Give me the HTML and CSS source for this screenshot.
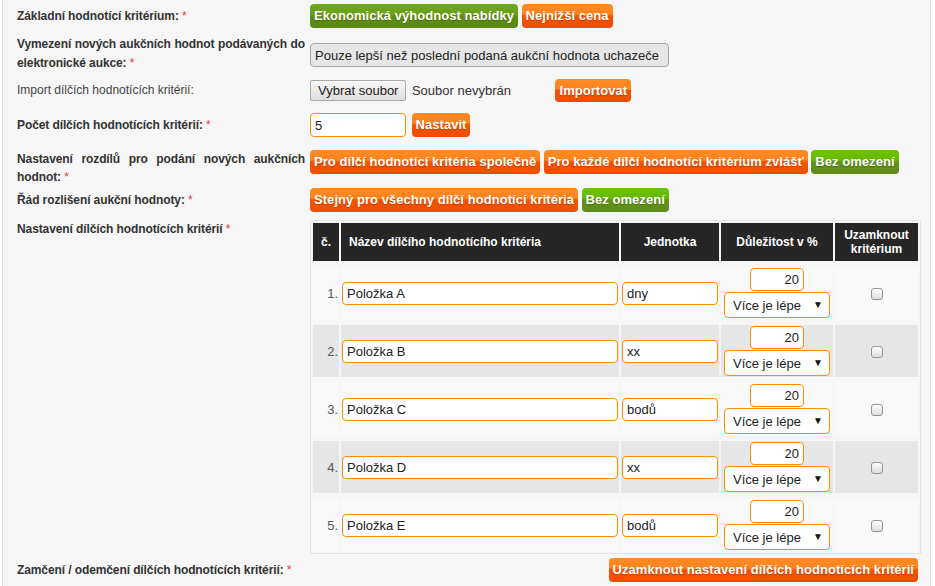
FILE: index.html
```html
<!DOCTYPE html>
<html>
  <head>
    <meta charset="UTF-8" />
    <title>Nastavení hodnotících kritérií</title>
    <link rel="stylesheet" href="styles.css">
  </head>
  <body>
    <div class="page">
      <div class="row row-1">
        <div class="label">Základní hodnotící kritérium: <span class="req">*</span></div>
        <div class="value">
          <button class="btn btn-green active">Ekonomická výhodnost nabídky</button>
          <button class="btn">Nejnižší cena</button>
        </div>
      </div>

      <div class="row row-2 top">
        <div class="label justify">Vymezení nových aukčních hodnot podávaných do elektronické aukce: <span class="req">*</span></div>
        <div class="value">
          <input class="readonly" type="text" value="Pouze lepší než poslední podaná aukční hodnota uchazeče" readonly />
        </div>
      </div>

      <div class="row row-3">
        <div class="label plain">Import dílčích hodnotících kritérií:</div>
        <div class="value">
          <button class="file-btn">Vybrat soubor</button>
          <span class="file-name">Soubor nevybrán</span>
          <button class="btn import">Importovat</button>
        </div>
      </div>

      <div class="row row-4">
        <div class="label">Počet dílčích hodnotících kritérií: <span class="req">*</span></div>
        <div class="value">
          <input class="field count" type="text" value="5" />
          <button class="btn set">Nastavit</button>
        </div>
      </div>

      <div class="row row-5 top">
        <div class="label justify tight">Nastavení rozdílů pro podání nových aukčních hodnot: <span class="req">*</span></div>
        <div class="value">
          <button class="btn">Pro dílčí hodnotící kritéria společně</button>
          <button class="btn">Pro každé dílčí hodnotící kritérium zvlášť</button>
          <button class="btn btn-green">Bez omezení</button>
        </div>
      </div>

      <div class="row row-6">
        <div class="label">Řád rozlišení aukční hodnoty: <span class="req">*</span></div>
        <div class="value">
          <button class="btn">Stejný pro všechny dílčí hodnotící kritéria</button>
          <button class="btn btn-green">Bez omezení</button>
        </div>
      </div>

      <div class="row row-7 top">
        <div class="label">Nastavení dílčích hodnotících kritérií <span class="req">*</span></div>
        <div class="value">
          <table class="crit">
            <colgroup>
              <col class="c-num">
              <col class="c-name">
              <col class="c-unit">
              <col class="c-weight">
              <col class="c-lock">
            </colgroup>
            <thead>
              <tr>
                <th>č.</th>
                <th class="th-name">Název dílčího hodnotícího kritéria</th>
                <th>Jednotka</th>
                <th>Důležitost v %</th>
                <th>Uzamknout<br>kritérium</th>
              </tr>
            </thead>
            <tbody>
              <tr>
                <td class="num">1.</td>
                <td><input class="field wide" type="text" value="Položka A" /></td>
                <td><input class="field wide" type="text" value="dny" /></td>
                <td>
                  <div class="weight">
                    <input class="field pct" type="text" value="20" />
                    <span class="sel"><select><option>Více je lépe</option><option>Méně je lépe</option></select></span>
                  </div>
                </td>
                <td class="lock"><input type="checkbox" /></td>
              </tr>
              <tr>
                <td class="num">2.</td>
                <td><input class="field wide" type="text" value="Položka B" /></td>
                <td><input class="field wide" type="text" value="xx" /></td>
                <td>
                  <div class="weight">
                    <input class="field pct" type="text" value="20" />
                    <span class="sel"><select><option>Více je lépe</option><option>Méně je lépe</option></select></span>
                  </div>
                </td>
                <td class="lock"><input type="checkbox" /></td>
              </tr>
              <tr>
                <td class="num">3.</td>
                <td><input class="field wide" type="text" value="Položka C" /></td>
                <td><input class="field wide" type="text" value="bodů" /></td>
                <td>
                  <div class="weight">
                    <input class="field pct" type="text" value="20" />
                    <span class="sel"><select><option>Více je lépe</option><option>Méně je lépe</option></select></span>
                  </div>
                </td>
                <td class="lock"><input type="checkbox" /></td>
              </tr>
              <tr>
                <td class="num">4.</td>
                <td><input class="field wide" type="text" value="Položka D" /></td>
                <td><input class="field wide" type="text" value="xx" /></td>
                <td>
                  <div class="weight">
                    <input class="field pct" type="text" value="20" />
                    <span class="sel"><select><option>Více je lépe</option><option>Méně je lépe</option></select></span>
                  </div>
                </td>
                <td class="lock"><input type="checkbox" /></td>
              </tr>
              <tr>
                <td class="num">5.</td>
                <td><input class="field wide" type="text" value="Položka E" /></td>
                <td><input class="field wide" type="text" value="bodů" /></td>
                <td>
                  <div class="weight">
                    <input class="field pct" type="text" value="20" />
                    <span class="sel"><select><option>Více je lépe</option><option>Méně je lépe</option></select></span>
                  </div>
                </td>
                <td class="lock"><input type="checkbox" /></td>
              </tr>
            </tbody>
          </table>
        </div>
      </div>

      <div class="row row-8">
        <div class="label">Zamčení / odemčení dílčích hodnotících kritérií: <span class="req">*</span></div>
        <div class="value end">
          <button class="btn lock-all">Uzamknout nastavení dílčích hodnotících kritérií</button>
        </div>
      </div>
    </div>
  </body>
</html>
```

FILE: styles.css
```css
:root {
  --page-bg: #f6f6f6;
  --page-border: #e2e2e2;
  --text: #333333;
  --req: #e8383d;
  --orange-top: #fe8c25;
  --orange-bottom: #ef4d00;
  --green-top: #6cc300;
  --green-bottom: #5f8b1a;
  --field-border: #ff8c00;
  --head-bg: #262626;
  --row-light: #f9f9f9;
  --row-dark: #e6e6e6;
}

body {
  margin: 0;
  padding: 0;
  background: #ffffff;
  font-family: "Liberation Sans", Arial, sans-serif;
  color: var(--text);
}

.page {
  box-sizing: border-box;
  width: 929px;
  min-height: 100vh;
  margin-left: 2px;
  padding: 0 9px 0 14px;
  background: var(--page-bg);
  border-left: 1px solid var(--page-border);
  border-right: 1px solid var(--page-border);
  overflow: hidden;
}

.row {
  display: grid;
  grid-template-columns: 288px 611px;
  column-gap: 5px;
  align-items: center;
}

.row.top {
  align-items: start;
}

.row-1 { margin-top: 4px; }
.row-2 { margin-top: 7px; }
.row-3 { margin-top: 6px; }
.row-4 { margin-top: 11px; }
.row-5 { margin-top: 13px; }
.row-6 { margin-top: 2px; }
.row-7 { margin-top: 8px; }
.row-8 { margin-top: 4px; }

.label {
  font-size: 12px;
  font-weight: bold;
  line-height: 19px;
  letter-spacing: -0.1px;
  color: var(--text);
}

.label.plain {
  font-weight: normal;
  letter-spacing: 0;
  color: #444444;
}

.label.justify {
  text-align: justify;
}

.label.tight {
  line-height: 18px;
}

.req {
  color: var(--req);
  font-weight: normal;
}

.value {
  display: flex;
  align-items: center;
  gap: 3.5px;
}

.value.end {
  justify-content: flex-end;
}

.btn {
  all: unset;
  display: inline-block;
  height: 24px;
  line-height: 24px;
  padding: 0 4px;
  border-radius: 4px;
  font-family: "Liberation Sans", Arial, sans-serif;
  font-size: 13px;
  font-weight: bold;
  letter-spacing: 0.05px;
  color: #ffffff;
  white-space: nowrap;
  text-shadow: 0 1px 1px rgba(120, 30, 0, 0.35);
  background: linear-gradient(
    var(--orange-top) 0%,
    #fd821e 42%,
    #f25400 50%,
    var(--orange-bottom) 100%
  );
  cursor: pointer;
}

.btn-green {
  text-shadow: 0 1px 1px rgba(30, 60, 0, 0.35);
  background: linear-gradient(
    var(--green-top) 0%,
    #68b804 42%,
    #62921a 50%,
    var(--green-bottom) 100%
  );
}

.btn-green.active {
  background: linear-gradient(
    #70a81e 0%,
    #6a9f1b 42%,
    #5f8e17 50%,
    #5a8813 100%
  );
}

.readonly {
  box-sizing: border-box;
  width: 359px;
  height: 24px;
  margin-top: 8px;
  padding: 0 4px;
  border: 1px solid #a3a3a3;
  border-radius: 4px;
  background: #e6e6e6;
  font-family: "Liberation Sans", Arial, sans-serif;
  font-size: 13px;
  color: #222222;
  outline: none;
}

.file-btn {
  box-sizing: border-box;
  height: 21px;
  padding: 0 7px;
  border: 1px solid #a7a7a7;
  border-radius: 2px;
  background: linear-gradient(#f7f7f7, #dddddd);
  font-family: "Liberation Sans", Arial, sans-serif;
  font-size: 13px;
  color: #222222;
}

.file-name {
  margin-left: 2px;
  font-size: 13px;
  color: #333333;
}

.btn.import {
  margin-left: 41px;
  height: 23px;
  line-height: 23px;
}

.field {
  box-sizing: border-box;
  height: 23px;
  padding: 0 4px;
  border: 1px solid var(--field-border);
  border-radius: 4px;
  background: #ffffff;
  font-family: "Liberation Sans", Arial, sans-serif;
  font-size: 13px;
  color: #222222;
  outline: none;
}

.field.count {
  width: 96px;
  height: 24px;
}

.btn.set {
  margin-left: 2px;
}

.btn.lock-all {
  margin-right: 3px;
}

/* criteria table */

.crit {
  table-layout: fixed;
  width: 611px;
  border: 1px solid #e3e3e3;
  border-spacing: 2px;
}

.c-num { width: 26px; }
.c-name { width: 278px; }
.c-unit { width: 98px; }
.c-weight { width: 112px; }
.c-lock { width: 83px; }

.crit th {
  height: 38px;
  padding: 0 3px;
  background: var(--head-bg);
  color: #ffffff;
  font-size: 12px;
  font-weight: bold;
  line-height: 14px;
  text-align: center;
}

.crit th.th-name {
  text-align: left;
  padding-left: 8px;
}

.crit td {
  height: 50px;
  padding: 1px;
  border-top: 4px solid transparent;
  background-clip: padding-box;
  vertical-align: middle;
  box-sizing: content-box;
}

.crit tbody tr:nth-child(odd) td {
  background-color: var(--row-light);
}

.crit tbody tr:nth-child(even) td {
  background-color: var(--row-dark);
}

.crit td.num {
  text-align: right;
  font-size: 13px;
  color: #555555;
}

.field.wide {
  width: 100%;
  display: block;
}

.weight {
  display: flex;
  flex-direction: column;
  align-items: center;
  gap: 1px;
}

.field.pct {
  width: 54px;
  text-align: right;
}

.sel {
  position: relative;
  display: block;
  width: 106px;
  height: 26px;
}

.sel select {
  appearance: none;
  -webkit-appearance: none;
  box-sizing: border-box;
  width: 106px;
  height: 26px;
  padding: 0 8px;
  border: 1px solid var(--field-border);
  border-radius: 4px;
  background: #ffffff;
  font-family: "Liberation Sans", Arial, sans-serif;
  font-size: 13px;
  color: #222222;
  outline: none;
}

.sel::after {
  content: '▼';
  position: absolute;
  right: 7px;
  top: 7px;
  font-size: 10px;
  line-height: 12px;
  color: #111111;
  pointer-events: none;
}

.crit td.lock {
  text-align: center;
}

.lock input {
  appearance: none;
  -webkit-appearance: none;
  width: 12px;
  height: 12px;
  margin: 0;
  border: 1px solid #959595;
  border-radius: 3px;
  background: linear-gradient(#fdfdfd, #dedede);
  vertical-align: middle;
}
```
